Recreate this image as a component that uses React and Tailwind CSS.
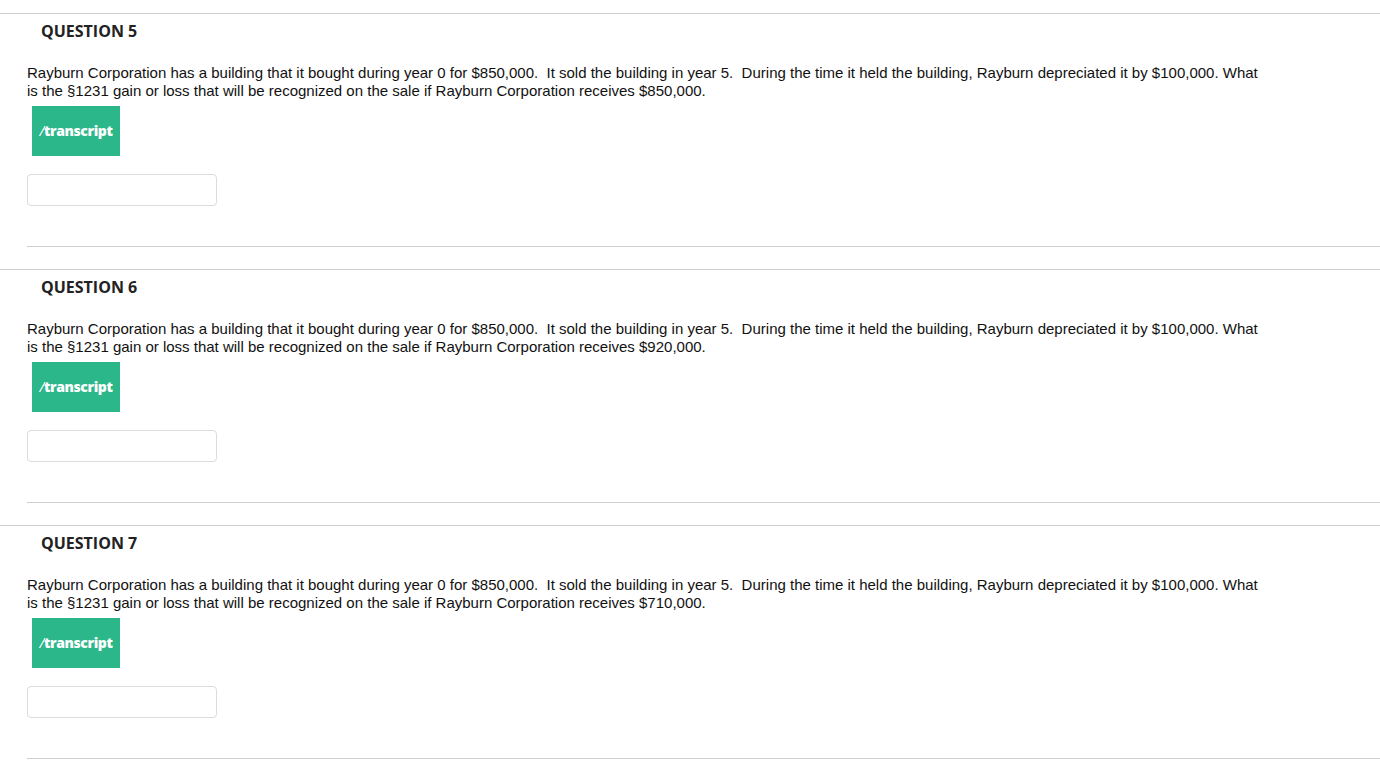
import React from "react";

const questions = [
  { n: 5, amt: "$850,000" },
  { n: 6, amt: "$920,000" },
  { n: 7, amt: "$710,000" },
];

function Question({ n, amt }) {
  return (
    <div className="border-t border-[#cfcfcf]">
      <h3
        className="mt-[6px] pl-[41px] text-[16px] leading-[22px] font-bold text-[#222]"
        style={{ fontFamily: '"Open Sans", sans-serif' }}
      >
        QUESTION {n}
      </h3>
      <p
        className="mt-[22px] ml-[27px] w-[1240px] text-[15px] leading-[18px] text-[#111] whitespace-pre-wrap"
        style={{ fontFamily: '"Liberation Sans", Arial, sans-serif' }}
      >
        {`Rayburn Corporation has a building that it bought during year 0 for $850,000.  It sold the building in year 5.  During the time it held the building, Rayburn depreciated it by $100,000. What is the §1231 gain or loss that will be recognized on the sale if Rayburn Corporation receives ${amt}.`}
      </p>
      <div className="mt-[6px] ml-[32px] w-[88px] h-[50px] pb-[2px] bg-[#2bb78a] flex items-center justify-center">
        <span
          className="text-white text-[14px] font-extrabold tracking-[-0.4px]"
          style={{ fontFamily: '"Open Sans", sans-serif' }}
        >
          <span className="font-normal italic">/</span>transcript
        </span>
      </div>
      <div className="mt-[18px] ml-[27px] w-[190px] h-[32px] border border-[#dcdcdc] rounded-[4px] bg-white" />
      <div className="mt-[40px] ml-[27px] border-t border-[#cfcfcf]" />
      <div className="h-[22px]" />
    </div>
  );
}

export default function App() {
  return (
    <div className="bg-white w-[1380px] h-[762px] overflow-hidden pt-[13px]">
      {questions.map((q) => (
        <Question key={q.n} {...q} />
      ))}
    </div>
  );
}
